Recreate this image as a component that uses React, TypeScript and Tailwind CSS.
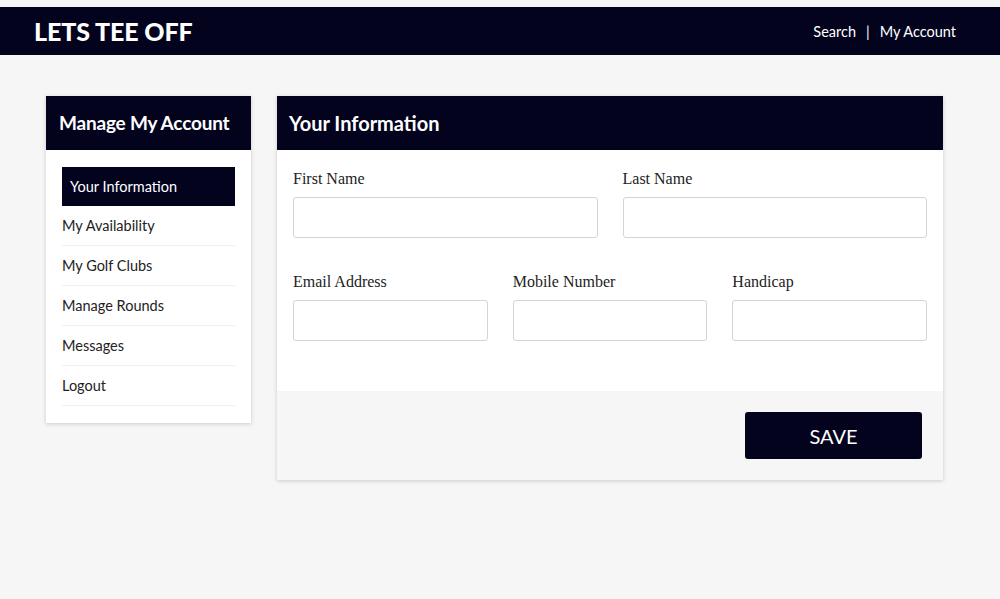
const navy = "bg-[#03031e]"

const menu = ["Your Information", "My Availability", "My Golf Clubs", "Manage Rounds", "Messages", "Logout"]

function Field({ label }: { label: string }) {
  return (
    <label className="flex flex-col">
      <span className="font-['Liberation_Serif',serif] text-[16px] leading-5 text-[#222]">{label}</span>
      <input
        type="text"
        className="mt-[8px] h-[41px] w-full rounded-[3px] border border-[#d4d4d4] bg-white px-3 outline-none"
      />
    </label>
  )
}

export default function App() {
  return (
    <div className="min-h-[599px] bg-[#f6f6f6] pt-[7px] font-['Lato',sans-serif]">
      <header className={`${navy} flex h-[48px] items-center justify-between pl-[34px] pr-[44px]`}>
        <h1 className="whitespace-nowrap pt-[2px] text-[25px] font-black tracking-[-0.1px] text-white">LETS TEE OFF</h1>
        <nav className="flex items-center pt-[2px] text-[14.5px] text-white">
          <a href="#">Search</a>
          <span className="mx-[10px]">|</span>
          <a href="#">My Account</a>
        </nav>
      </header>

      <main className="flex items-start gap-[26px] pl-[46px] pt-[41px]">
        <aside className="w-[205px] bg-white shadow-[0_1px_4px_rgba(0,0,0,0.18)]">
          <div className={`${navy} flex h-[54px] items-center px-[13px]`}>
            <h2 className="whitespace-nowrap text-[19px] font-bold tracking-[-0.2px] text-white">Manage My Account</h2>
          </div>
          <ul className="px-4 pb-[17px] pt-[17px]">
            {menu.map((item, i) => (
              <li
                key={item}
                className={
                  i === 0
                    ? `${navy} flex h-[39px] items-center px-2 text-[14.5px] text-white`
                    : "flex h-[40px] items-center border-b border-[#f0f0f0] text-[14.5px] text-[#222]"
                }
              >
                {item}
              </li>
            ))}
          </ul>
        </aside>

        <section className="w-[666px] bg-white shadow-[0_1px_4px_rgba(0,0,0,0.18)]">
          <div className={`${navy} flex h-[54px] items-center px-3`}>
            <h2 className="whitespace-nowrap text-[20px] font-bold text-white">Your Information</h2>
          </div>
          <form className="flex flex-col">
            <div className="px-4 pb-[50px] pt-[19px]">
              <div className="grid grid-cols-2 gap-x-[25px]">
                <Field label="First Name" />
                <Field label="Last Name" />
              </div>
              <div className="mt-[34px] grid grid-cols-3 gap-x-[25px]">
                <Field label="Email Address" />
                <Field label="Mobile Number" />
                <Field label="Handicap" />
              </div>
            </div>
            <div className="flex justify-end bg-[#f6f6f6] pb-[21px] pr-[21px] pt-[21px]">
              <button
                type="button"
                className={`${navy} h-[47px] w-[177px] rounded-[3px] text-[20px] text-white`}
              >
                SAVE
              </button>
            </div>
          </form>
        </section>
      </main>
    </div>
  )
}
